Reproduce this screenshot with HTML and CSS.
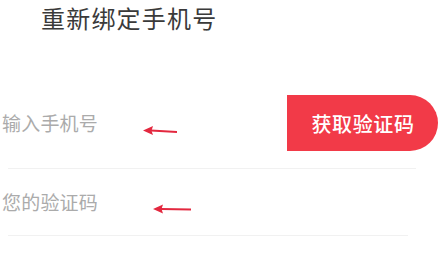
FILE: index.html
```html
<!DOCTYPE html>
<html lang="zh">
<head>
<meta charset="utf-8">
<link rel="stylesheet" href="styles.css">
</head>
<body>
<div class="page">
  <h1 class="title">重新绑定手机号</h1>
  <div class="row row-phone">
    <span class="placeholder">输入手机号</span>
    <svg class="arrow arrow-1" width="34" height="12" viewBox="0 0 34 12"><path d="M34 7 L8 5.6" stroke="#e3283f" stroke-width="2" fill="none"/><path d="M0 5.5 L10 1 L8.5 5.8 L10 10 Z" fill="#e3283f"/></svg>
    <button class="code-btn">获取验证码</button>
  </div>
  <div class="divider divider-1"></div>
  <div class="row row-code">
    <span class="placeholder">您的验证码</span>
    <svg class="arrow arrow-2" width="38" height="12" viewBox="0 0 38 12"><path d="M38 6.4 L8 6" stroke="#e3283f" stroke-width="2" fill="none"/><path d="M0 6 L10 1.5 L8.5 6 L10 10.5 Z" fill="#e3283f"/></svg>
  </div>
  <div class="divider divider-2"></div>
</div>
</body>
</html>
```
FILE: styles.css
```css
html, body {
  margin: 0;
  padding: 0;
  background: #ffffff;
}
.page {
  width: 442px;
  height: 269px;
  overflow: hidden;
  font-family: "Noto Sans CJK SC", "Noto Sans", sans-serif;
}
.title {
  margin: 6px 0 0 41px;
  font-size: 24px;
  line-height: 24px;
  font-weight: 400;
  color: #3a3a3a;
  letter-spacing: 1.2px;
}
.row {
  position: relative;
  display: flex;
  align-items: center;
  padding-left: 2px;
}
.row-phone {
  margin-top: 65px;
  height: 56px;
}
.row-code {
  height: 66px;
}
.placeholder {
  font-size: 19px;
  line-height: 20px;
  color: #ababab;
  letter-spacing: 0.2px;
}
.arrow {
  position: absolute;
}
.arrow-1 {
  left: 143px;
  top: 30px;
}
.arrow-2 {
  left: 153px;
  top: 34px;
}
.code-btn {
  margin-left: auto;
  margin-right: 4px;
  width: 151px;
  height: 56px;
  border: none;
  border-radius: 0 28px 28px 0;
  background: #f23a48;
  color: #ffffff;
  font-family: "Noto Sans CJK SC", "Noto Sans", sans-serif;
  font-size: 20px;
  font-weight: 500;
  padding: 0 0 0 1px;
  letter-spacing: 0.6px;
}
.divider {
  height: 1px;
  background: #f1f1f1;
  margin-left: 8px;
}
.divider-1 {
  margin-top: 17px;
  width: 408px;
}
.divider-2 {
  width: 400px;
}
```
